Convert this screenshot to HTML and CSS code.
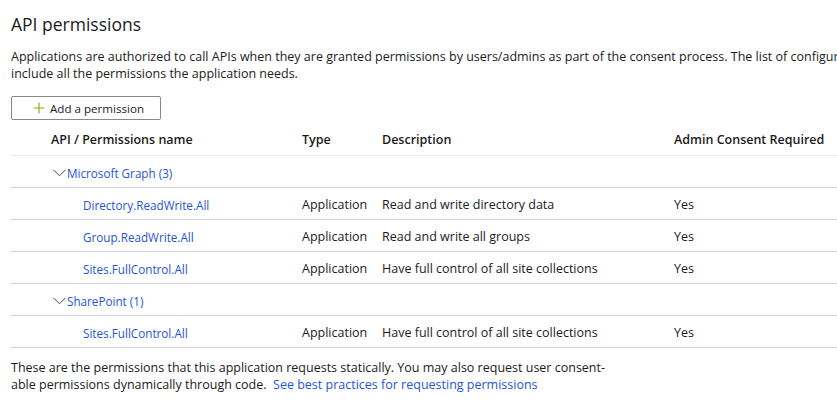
FILE: index.html
```html
<!DOCTYPE html>
<html lang="en">
<head>
<meta charset="utf-8">
<title>API permissions</title>
<link rel="stylesheet" href="styles.css">
</head>
<body>
<main class="page">
  <h1 class="title">API permissions</h1>
  <p class="intro">Applications are authorized to call APIs when they are granted permissions by users/admins as part of the consent process. The list of configured permissions should include all the permissions the application needs.</p>
  <button class="add-btn" type="button">
    <svg class="plus" width="12" height="12" viewBox="0 0 12 12" aria-hidden="true"><path d="M6 0.5V11.5M0.5 6H11.5" stroke="#7fba00" stroke-width="1.2" fill="none"/></svg>
    <span>Add a permission</span>
  </button>
  <div class="table">
    <div class="row head">
      <div class="c-name">API / Permissions name</div>
      <div class="c-type">Type</div>
      <div class="c-desc">Description</div>
      <div class="c-admin">Admin Consent Required</div>
    </div>
    <div class="row group">
      <div class="c-name"><svg class="chev" width="13" height="8" viewBox="0 0 13 8" aria-hidden="true"><path d="M0.5 0.8L6.5 6.8L12.5 0.8" stroke="#444" stroke-width="1" fill="none"/></svg><a href="#">Microsoft Graph (3)</a></div>
    </div>
    <div class="row">
      <div class="c-name perm"><a href="#">Directory.ReadWrite.All</a></div>
      <div class="c-type">Application</div>
      <div class="c-desc">Read and write directory data</div>
      <div class="c-admin">Yes</div>
    </div>
    <div class="row">
      <div class="c-name perm"><a href="#">Group.ReadWrite.All</a></div>
      <div class="c-type">Application</div>
      <div class="c-desc">Read and write all groups</div>
      <div class="c-admin">Yes</div>
    </div>
    <div class="row">
      <div class="c-name perm"><a href="#">Sites.FullControl.All</a></div>
      <div class="c-type">Application</div>
      <div class="c-desc">Have full control of all site collections</div>
      <div class="c-admin">Yes</div>
    </div>
    <div class="row group">
      <div class="c-name"><svg class="chev" width="13" height="8" viewBox="0 0 13 8" aria-hidden="true"><path d="M0.5 0.8L6.5 6.8L12.5 0.8" stroke="#444" stroke-width="1" fill="none"/></svg><a href="#">SharePoint (1)</a></div>
    </div>
    <div class="row">
      <div class="c-name perm"><a href="#">Sites.FullControl.All</a></div>
      <div class="c-type">Application</div>
      <div class="c-desc">Have full control of all site collections</div>
      <div class="c-admin">Yes</div>
    </div>
  </div>
  <p class="footer">These are the permissions that this application requests statically. You may also request user consent-able permissions dynamically through code. &nbsp;<a href="#">See best practices for requesting permissions</a></p>
</main>
</body>
</html>
```

FILE: styles.css
```css
html, body {
  margin: 0;
  padding: 0;
  background: #fff;
  overflow: hidden;
}
body {
  font-family: "Open Sans", "Noto Sans", sans-serif;
  font-size: 12.5px;
  color: #1b1b1b;
}
a {
  color: #1f55d8;
  text-decoration: none;
}
.page {
  width: 1100px;
  padding: 0 0 0 11px;
}
.title {
  margin: 0;
  padding-top: 12px;
  font-size: 17.5px;
  font-weight: 400;
  line-height: 24px;
  color: #1b1b1b;
}
.intro {
  margin: 12px 0 0;
  line-height: 17px;
  width: 1000px;
}
.add-btn {
  display: flex;
  align-items: center;
  gap: 5px;
  margin-top: 14px;
  width: 150px;
  height: 24px;
  padding: 0 0 0 21px;
  border: 1px solid #8a8886;
  border-radius: 2px;
  background: #fff;
  font-family: inherit;
  font-size: 11.6px;
  color: #1b1b1b;
}
.plus { display: block; }
.table {
  margin-top: 4px;
}
.row {
  display: flex;
  align-items: center;
  box-sizing: border-box;
  height: 32px;
  padding-top: 2px;
  border-bottom: 1px solid #d0d0d0;
}
.row.head {
  height: 32px;
  padding-top: 0;
  font-weight: 600;
  border-bottom-color: #ececec;
}
.c-name {
  width: 251px;
  padding-left: 40px;
  display: flex;
  align-items: center;
}
.c-name a { font-size: 11.7px; }
.group .c-name { padding-left: 42px; }
.c-name.perm { padding-left: 72px; width: 219px; }
.chev { display: block; margin-right: 1px; }
.c-type { width: 80px; }
.c-desc { width: 292px; }
.c-admin { width: 200px; }
.footer {
  margin: 11px 0 0;
  width: 600px;
  line-height: 17px;
}
```
